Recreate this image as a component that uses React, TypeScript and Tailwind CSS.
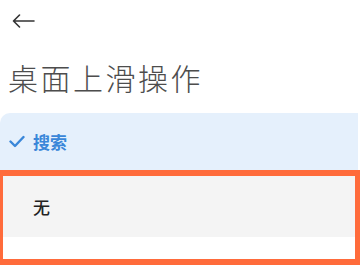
export default function App() {
  return (
    <div
      className="flex h-[270px] w-[360px] flex-col overflow-hidden bg-white"
      style={{ fontFamily: '"Noto Sans CJK SC", "Noto Sans", sans-serif' }}
    >
      <div className="flex h-[42px] items-center pl-[12px]">
        <svg width="23" height="14" viewBox="0 0 23 14" fill="none" stroke="#333" strokeWidth="1.6" strokeLinecap="round" strokeLinejoin="round">
          <path d="M22 7H1.5M7.5 1L1.5 7l6 6" />
        </svg>
      </div>

      <h1 className="mt-[12px] h-[46px] pl-[8px] text-[30px] leading-[46px] font-light tracking-[2.5px] text-[#4d4d4d]">
        桌面上滑操作
      </h1>

      <div className="mt-[13px] flex h-[57px] w-[358px] items-center gap-[8px] rounded-tl-[10px] bg-[#e5f0fc] pl-[9px]">
        <svg width="16" height="13" viewBox="0 0 16 13" fill="none" stroke="#3a87d9" strokeWidth="2.4" strokeLinecap="round" strokeLinejoin="round">
          <path d="M1.5 6.5l4.5 4.5 8.5-9" />
        </svg>
        <span className="text-[17px] font-bold leading-none text-[#3a87d9]">搜索</span>
      </div>

      <div className="h-[95px] w-[360px] border-t-[6px] border-r-[5px] border-b-[6px] border-l-[3px] border-[#ff6b3b]">
        <div className="flex h-[61px] items-center bg-[#f4f4f4] pl-[30px]">
          <span className="text-[17px] font-medium leading-none text-[#222]">无</span>
        </div>
      </div>
    </div>
  );
}
